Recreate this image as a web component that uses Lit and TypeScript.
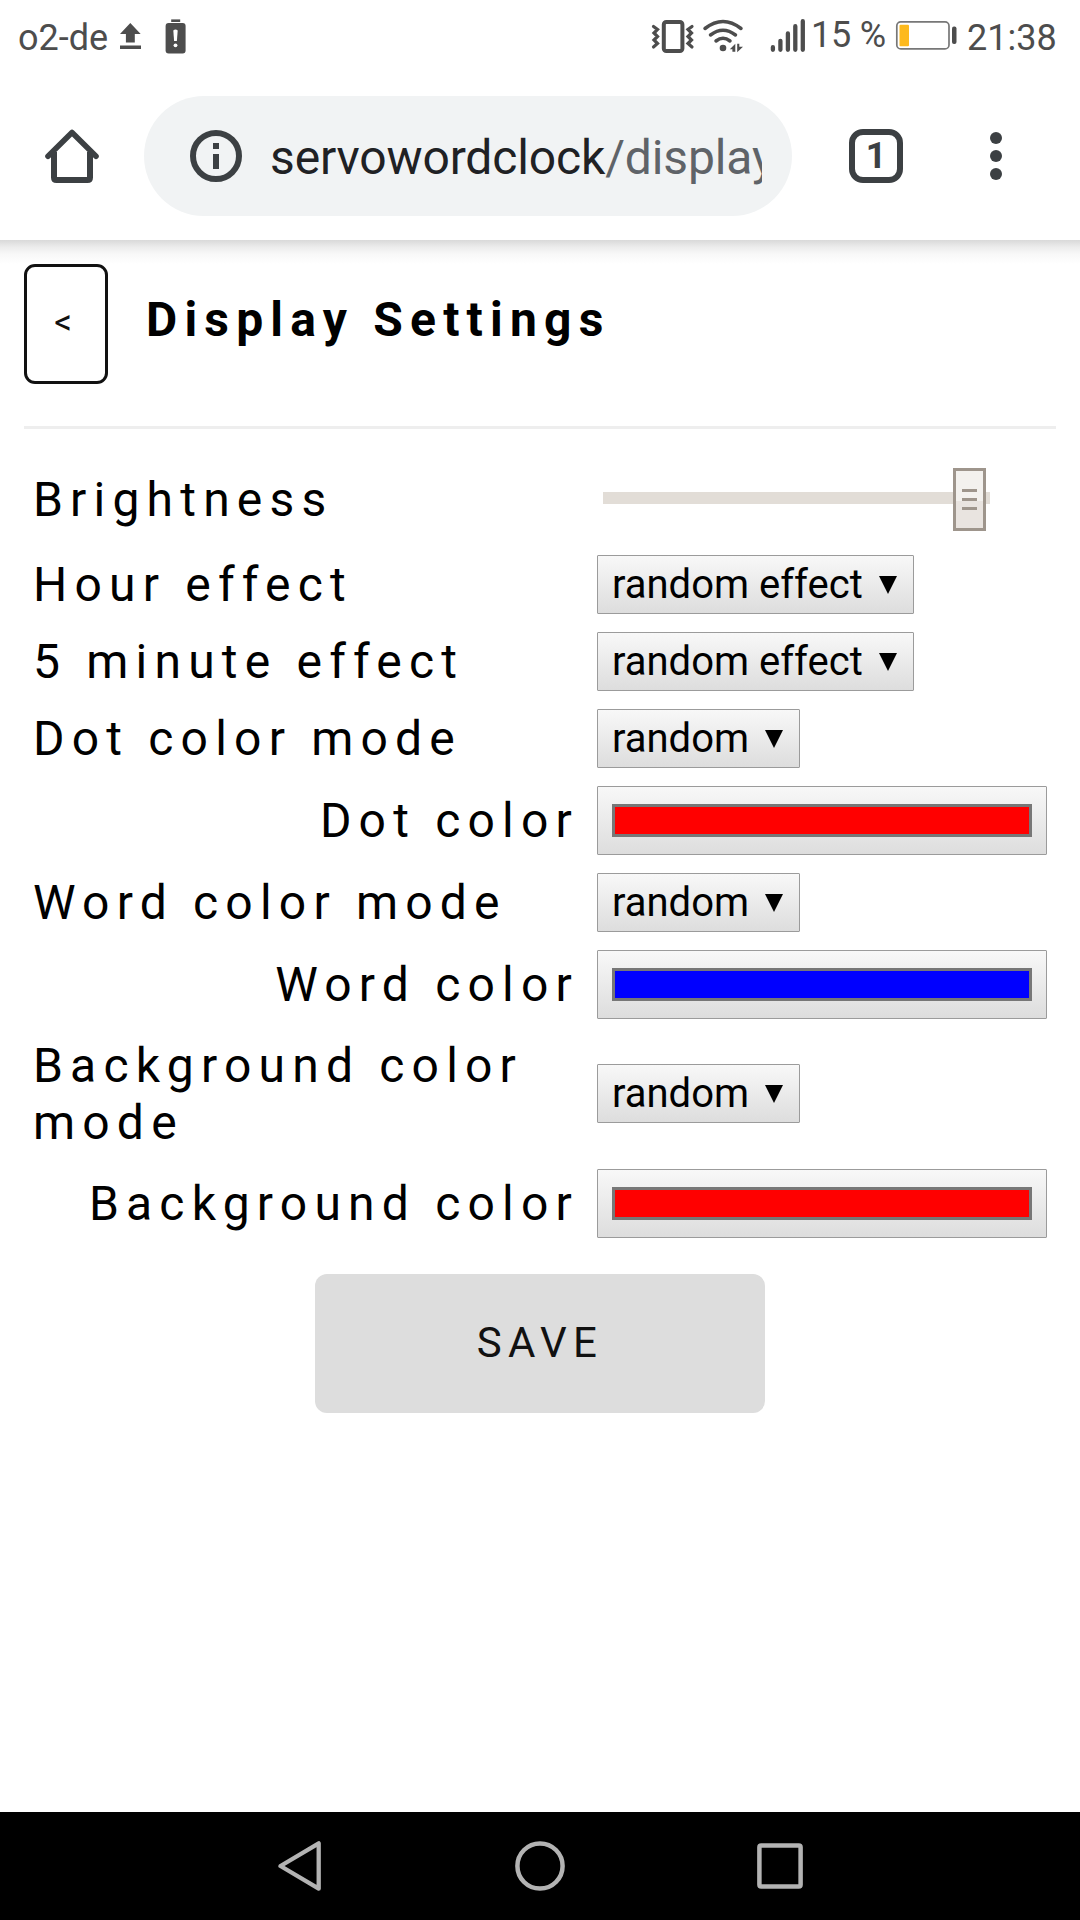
import { LitElement, html, css, svg, TemplateResult } from "lit";
import { customElement, property } from "lit/decorators.js";
import { styleMap } from "lit/directives/style-map.js";

@customElement("status-bar")
class StatusBar extends LitElement {
  static styles = css`
    :host { display: block; }
    .bar {
      display: flex; justify-content: space-between; height: 72px; padding: 0 24px 0 18px;
      color: #4d4d4d; font-size: 36px; line-height: 42px;
    }
    .side { display: flex; align-items: flex-start; }
    svg { display: block; flex: none; }
    .carrier { width: 97px; margin-top: 17px; }
    .percent { width: 83px; margin-top: 14px; margin-left: 2px; letter-spacing: -0.2px; white-space: nowrap; }
    .time { margin-top: 17px; width: 89px; margin-left: 6px; white-space: nowrap; }
  `;
  render() {
    return html`<div class="bar">
      <div class="side">
        <span class="carrier">o2-de</span>
        <svg width="80" height="72" viewBox="115 0 80 72" fill="#4d4d4d">
          <path d="M130.3 23l10.4 11h-5.9v8.5h-8.9V34H120zM120 45.5h21V49h-21z" />
          <rect x="165.6" y="23" width="20" height="30.5" rx="3" />
          <rect x="171.2" y="19.4" width="9" height="2.6" />
          <path d="M173.3 30.5q2.2-2 4.4 0l-.8 10.5h-2.8z" fill="#fff" />
          <circle cx="175.5" cy="45.3" r="1.9" fill="#fff" />
        </svg>
      </div>
      <div class="side">
        <svg width="160" height="72" viewBox="649 0 160 72" fill="none" stroke="#4d4d4d">
          <rect x="663.8" y="22" width="18.6" height="29" rx="2.5" stroke-width="4" />
          <path d="M653.5 26.5l4 3-3.500 3.500 3.500 3.500-3.500 3.500 3.500 3.500-4 3.500M692 26.500l-4 3 3.500 3.500-3.500 3.500 3.500 3.500-3.500 3.500 4 3.500" stroke-width="3.200" stroke-linecap="round" />
          <path d="M705 28.500Q723 14.500 741 28.500M710.500 35Q723 25.500 735.500 35M716 41Q723 35.500 730 41" stroke-width="3.500" stroke-linecap="round" />
          <circle cx="723" cy="48" r="3.300" fill="#4d4d4d" stroke="none" />
          <path d="M735.300 43.700V51.800H732.400V49.300H729.800zM737.200 43.700H739.300V46.800H743L737.200 52.200z" fill="#4d4d4d" stroke="none" />
          <path d="M772.900 47.200v2.600M780.400 40.800v9M787.900 33.400v16.400M795.300 26.200v23.600M802.800 21.200v28.600" stroke-width="4.300" stroke-linecap="round" />
        </svg>
        <span class="percent">15 %</span>
        <svg width="67" height="72" viewBox="894 0 67 72">
          <rect x="896.800" y="21.900" width="52.200" height="27" rx="4" fill="none" stroke="#777" stroke-width="1.700" />
          <rect x="899.500" y="24.800" width="9.500" height="21.400" rx="1" fill="#fdb91c" />
          <rect x="952" y="26.500" width="4.500" height="17.500" rx="2" fill="#4d4d4d" />
        </svg>
        <span class="time">21:38</span>
      </div>
    </div>`;
  }
}

@customElement("browser-bar")
class BrowserBar extends LitElement {
  static styles = css`
    :host { display: block; }
    .bar { display: flex; align-items: center; height: 120px; padding: 24px 0 24px 45px; }
    svg { display: block; flex: none; }
    .address {
      display: flex; align-items: center; box-sizing: border-box; width: 648px; height: 120px;
      margin-left: 45px; padding-left: 46px; border-radius: 60px; background: #f1f3f4;
    }
    .url {
      width: 492px; margin-left: 28px; overflow: hidden; white-space: nowrap;
      font-size: 48px; line-height: 60px; color: #5f6368; margin-top: 4px; letter-spacing: -0.14px;
    }
    .host { color: #202124; }
    .tabs {
      display: flex; align-items: center; justify-content: center; box-sizing: border-box;
      width: 54px; height: 54px; margin: 0 87px 0 57px; border: 6px solid #3c4043;
      border-radius: 14px; color: #3c4043; font-size: 36px; font-weight: 700; line-height: 42px;
    }
  `;
  render() {
    return html`<div class="bar">
      <svg width="54" height="54" viewBox="45 129 54 54" fill="none" stroke="#3c4043" stroke-width="6">
        <path d="M54 152v25.500q0 2.500 2.500 2.500h31q2.500 0 2.500-2.500V152" />
        <path d="M48 156.200L72 132.500L96 156.200" stroke-width="5.600" stroke-linecap="round" stroke-linejoin="round" />
      </svg>
      <div class="address">
        <svg width="52" height="52" viewBox="0 0 52 52" fill="#3c4043">
          <circle cx="26" cy="26" r="23" fill="none" stroke="#3c4043" stroke-width="6" />
          <path d="M23 13h6v6h-6zM23 24h6v15h-6z" />
        </svg>
        <div class="url"><span class="host">servowordclock</span>/display</div>
      </div>
      <div class="tabs">1</div>
      <svg width="12" height="54" viewBox="0 0 12 54" fill="#3c4043">
        <circle cx="6" cy="9" r="6" /><circle cx="6" cy="27" r="6" /><circle cx="6" cy="45" r="6" />
      </svg>
    </div>`;
  }
}

@customElement("drop-down")
class DropDown extends LitElement {
  @property() value = "";
  static styles = css`
    :host { display: block; }
    .select {
      display: inline-flex; align-items: center; box-sizing: border-box; height: 59px;
      padding: 0 16px 0 14px; border: 1px solid #9b9b9b; border-radius: 1px;
      background: linear-gradient(#f8f8f8, #ddd); font-size: 40px; line-height: 47px;
      color: #000; vertical-align: top; white-space: nowrap;
    }
    .arrow { width: 18px; height: 18px; margin-left: 16.3px; }
  `;
  render() {
    return html`<div class="select">${this.value}
      <svg class="arrow" viewBox="0 0 18 18"><path d="M0 0h18L9 18z" /></svg>
    </div>`;
  }
}

@customElement("color-well")
class ColorWell extends LitElement {
  @property() value = "";
  static styles = css`
    :host { display: block; }
    .well {
      box-sizing: border-box; height: 69px; padding: 17px 14px; border: 1px solid #9b9b9b;
      border-radius: 1px; background: linear-gradient(#f8f8f8, #ddd);
    }
    .swatch { box-sizing: border-box; height: 33px; border: 3px solid #777; }
  `;
  render() {
    return html`<div class="well"><div class="swatch" style=${styleMap({ background: this.value })}></div></div>`;
  }
}

@customElement("brightness-slider")
class BrightnessSlider extends LitElement {
  static styles = css`
    :host { display: block; }
    svg { display: block; }
  `;
  render() {
    return html`<svg width="450" height="75" viewBox="597 462 450 75" shape-rendering="crispEdges">
      <rect x="603" y="492" width="387" height="12" fill="#e2ddd7" />
      <rect x="953" y="468" width="33" height="63" fill="#9e958c" />
      <rect x="956" y="471" width="27" height="30" fill="#f3f1ee" />
      <rect x="956" y="501" width="27" height="27" fill="#e9e4e0" />
      ${[489, 498, 507].map((y) => svg`<rect x="962" y=${y} width="15" height="3" fill="#9e958c" />`)}
    </svg>`;
  }
}

type Row = { label: string; nested?: boolean; tall?: boolean; control: TemplateResult };

const select = (v: string) => html`<drop-down .value=${v}></drop-down>`;
const color = (v: string) => html`<color-well .value=${v}></color-well>`;

const rows: Row[] = [
  { label: "Brightness", control: html`<brightness-slider></brightness-slider>` },
  { label: "Hour effect", control: select("random effect") },
  { label: "5 minute effect", control: select("random effect") },
  { label: "Dot color mode", control: select("random") },
  { label: "Dot color", nested: true, control: color("#ff0000") },
  { label: "Word color mode", control: select("random") },
  { label: "Word color", nested: true, control: color("#0000ff") },
  { label: "Background color mode", tall: true, control: select("random") },
  { label: "Background color", nested: true, control: color("#ff0000") },
];

@customElement("app-root")
class AppRoot extends LitElement {
  static styles = css`
    :host {
      display: flex; flex-direction: column; width: 1080px; height: 1920px; overflow: hidden;
      background: #fff; font-family: Roboto, "Liberation Sans", sans-serif; color: #000;
    }
    .content {
      flex: 1; padding: 24px 24px 0;
      background: linear-gradient(#d9d9d9, #ececec 7px, #f8f8f8 14px, #fff 24px) top / 100% 24px no-repeat;
    }
    .header { display: flex; height: 120px; padding-bottom: 42px; border-bottom: 3px solid #eee; }
    .back {
      display: flex; align-items: center; justify-content: center; box-sizing: border-box;
      width: 84px; height: 120px; padding-bottom: 2px; border: 3px solid #111; border-radius: 11px;
      font-size: 35px; line-height: 40px; color: #111; letter-spacing: 5.5px;
    }
    .title {
      margin: 27px 0 0 38px; font-size: 48px; line-height: 57px; font-weight: 700;
      letter-spacing: 7.2px;
    }
    .form {
      display: grid; grid-template-columns: 546px 450px; column-gap: 18px; row-gap: 18px;
      align-items: center; padding: 33px 9px 0;
    }
    .label { font-size: 48px; line-height: 57px; letter-spacing: 7.2px; }
    .nested { text-align: right; }
    .tall { padding-bottom: 1px; }
    .save {
      display: flex; align-items: center; justify-content: center; box-sizing: border-box;
      width: 450px; height: 139px; padding-bottom: 2px;
      margin: 36px auto 0; border-radius: 12px; background: #ddd; color: #111;
      font-size: 42px; line-height: 50px; letter-spacing: 6.3px;
    }
    .nav {
      display: flex; align-items: center; justify-content: space-between; height: 108px;
      padding: 0 277px 0 278px; background: #000;
    }
    .nav svg { display: block; }
    .home { margin-left: 2px; }
  `;
  render() {
    return html`
      <status-bar></status-bar>
      <browser-bar></browser-bar>
      <div class="content">
        <div class="header">
          <div class="back">&lt;</div>
          <div class="title">Display Settings</div>
        </div>
        <div class="form">
          ${rows.map((r) => html`
            <div class="label ${r.nested ? "nested" : ""}">${r.label}</div>
            <div class=${r.tall ? "tall" : ""}>${r.control}</div>`)}
        </div>
        <div class="save">SAVE</div>
      </div>
      <div class="nav">
        <svg width="43" height="50" viewBox="278 1841 43 50" fill="none" stroke="#b3b3b3" stroke-width="4.300" stroke-linejoin="round">
          <path d="M318.700 1843.300V1888.700L280.500 1866z" />
        </svg>
        <svg class="home" width="50" height="50" viewBox="0 0 50 50" fill="none" stroke="#b3b3b3" stroke-width="4.500">
          <circle cx="25" cy="25" r="22.600" />
        </svg>
        <svg width="46" height="46" viewBox="0 0 46 46" fill="none" stroke="#b3b3b3" stroke-width="4.500">
          <rect x="2.400" y="2.400" width="41.200" height="41.200" rx="1.800" />
        </svg>
      </div>`;
  }
}
